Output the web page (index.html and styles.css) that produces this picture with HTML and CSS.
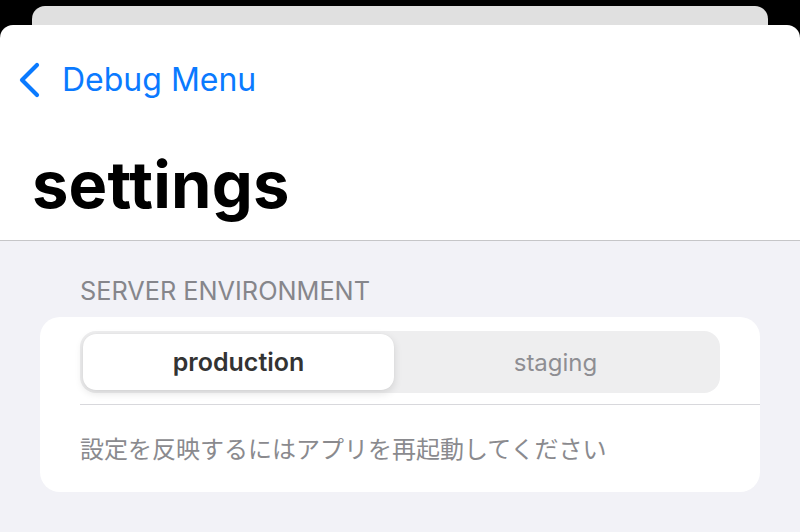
FILE: index.html
```html
<!DOCTYPE html>
<html lang="ja">
<head>
    <meta charset="UTF-8">
    <meta name="viewport" content="width=device-width, initial-scale=1.0">
    <title>settings</title>
    <link rel="stylesheet" href="styles.css">
</head>
<body>
    <div class="back-sheet"></div>
    <div class="sheet">
        <div class="nav-bar">
            <svg class="chevron" width="26" height="36" viewBox="0 0 26 36">
                <path d="M21 3 L6 18 L21 33" fill="none" stroke="#0a7aff" stroke-width="4.2" stroke-linecap="round" stroke-linejoin="round"/>
            </svg>
            <span class="nav-back">Debug Menu</span>
        </div>
        <h1 class="large-title">settings</h1>
        <div class="grouped">
            <div class="section-header">SERVER ENVIRONMENT</div>
            <div class="card">
                <div class="card-row">
                    <div class="segmented">
                        <div class="segment selected">production</div>
                        <div class="segment">staging</div>
                    </div>
                </div>
                <div class="card-footer">設定を反映するにはアプリを再起動してください</div>
            </div>
        </div>
    </div>
</body>
</html>
```

FILE: styles.css
```css
*{
    box-sizing: border-box;
}
body{
    margin: 0;
    height: 532px;
    overflow: hidden;
    background-color: #000000;
    font-family: Inter, "Noto Sans CJK JP", sans-serif;
}
.back-sheet{
    margin: 6px 32px 0;
    height: 19px;
    background-color: #e0e0e0;
    border-radius: 13px 13px 0 0;
}
.sheet{
    background-color: #ffffff;
    border-radius: 13px 13px 0 0;
    height: 507px;
    display: flex;
    flex-direction: column;
}
.nav-bar{
    display: flex;
    align-items: center;
    gap: 20px;
    padding: 35px 0 0 16px;
    height: 75px;
}
.nav-back{
    color: #0a7aff;
    font-size: 32px;
    line-height: 40px;
}
.large-title{
    margin: 0;
    padding: 45px 0 15px 32px;
    font-size: 65px;
    line-height: 80px;
    font-weight: 700;
    color: #000000;
    letter-spacing: 0.2px;
    border-bottom: 1px solid #c6c6c8;
}
.grouped{
    flex: 1;
    background-color: #f2f2f7;
    padding: 34px 40px 0;
}
.section-header{
    padding-left: 40px;
    font-size: 25.3px;
    line-height: 32px;
    color: #86868b;
    margin-bottom: 10px;
}
.card{
    background-color: #ffffff;
    border-radius: 20px;
}
.card-row{
    padding: 14px 40px 11px 0;
    margin-left: 40px;
    border-bottom: 1px solid #d8d8dc;
}
.segmented{
    display: flex;
    height: 62px;
    padding: 3px;
    background-color: #eeeeef;
    border-radius: 16px;
}
.segment{
    flex: 1;
    display: flex;
    align-items: center;
    justify-content: center;
    font-size: 24px;
    color: #8e8e93;
}
.segment.selected{
    flex: 0 0 311px;
    background-color: #ffffff;
    border-radius: 13px;
    font-size: 25px;
    font-weight: 600;
    color: #333333;
    box-shadow: 0 3px 8px rgba(0, 0, 0, 0.12), 0 0 1px rgba(0, 0, 0, 0.08);
}
.card-footer{
    padding: 29px 40px 26px;
    font-size: 24px;
    line-height: 32px;
    color: #8a8a8e;
}
```
